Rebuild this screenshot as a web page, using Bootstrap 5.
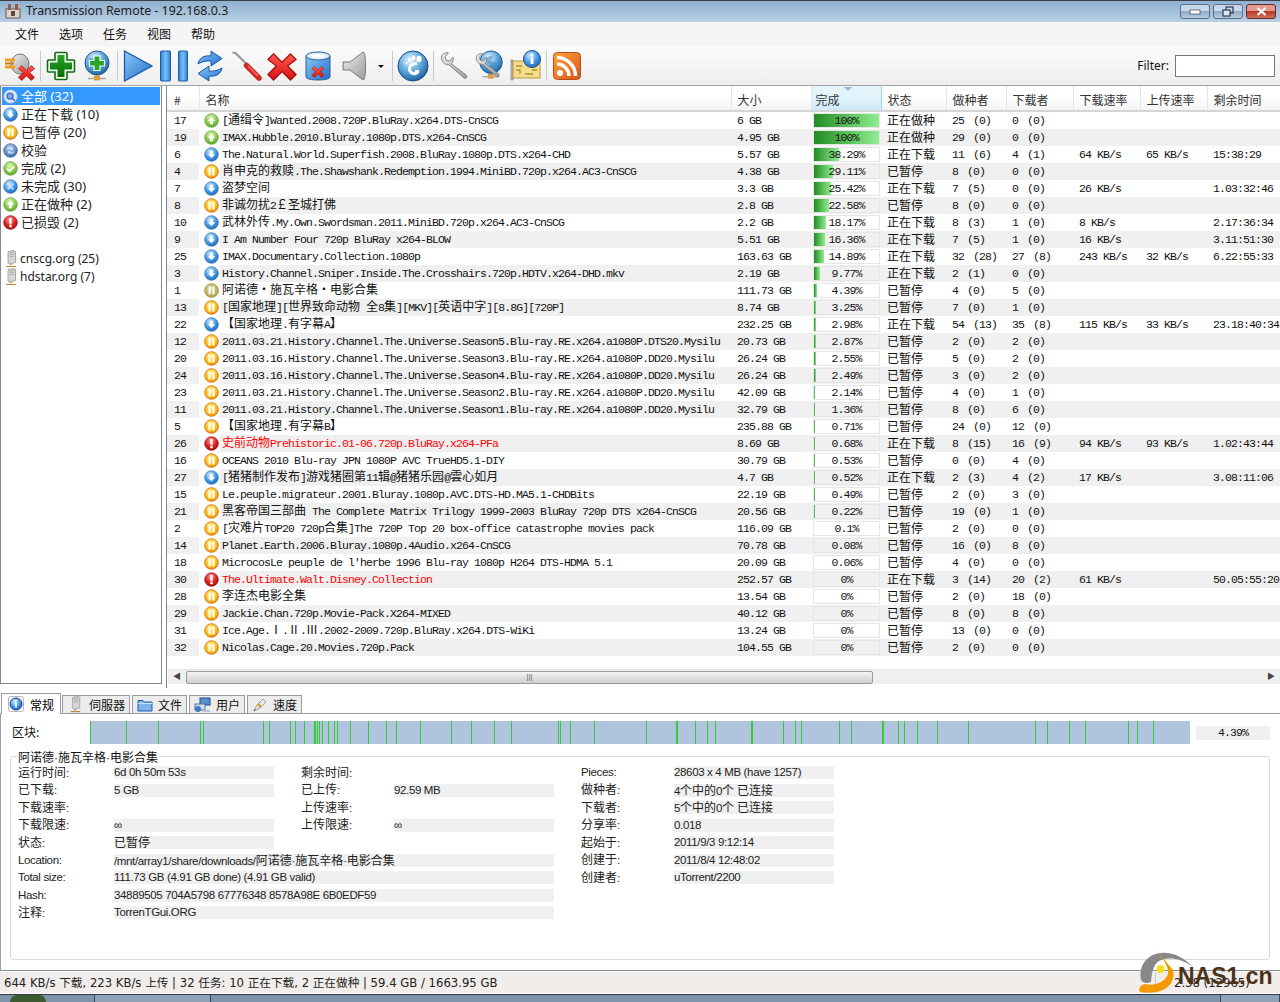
<!DOCTYPE html>
<html lang="en">
<head>
    <meta charset="UTF-8">
    <title>Transmission Remote - 192.168.0.3</title>
    <link href="https://cdn.jsdelivr.net/npm/bootstrap@5.3.3/dist/css/bootstrap.min.css" rel="stylesheet">
    <style>
        html, body { height: 1002px; overflow: hidden; }
        body {
            background: #fff;
            color: #111;
            font-family: "Liberation Sans", "Noto Sans CJK SC", sans-serif;
            font-size: 12px;
        }
        .svg-defs { width: 0; height: 0; position: absolute; }

        /* window chrome */
        .win-title {
            height: 22px;
            border-top: 1px solid #3a3f46;
            background: linear-gradient(#8fb0d0, #b9cfe4);
            font-family: "Noto Sans", sans-serif;
            font-size: 12.4px;
            padding-left: 5px;
            padding-bottom: 1px;
        }
        .win-title .app-name { margin-left: 5px; color: #1a1a1a; }
        .win-btn {
            width: 30px; height: 15px;
            border: 1px solid #5c6f86;
            border-radius: 3px;
            background: linear-gradient(#c9d9ea 45%, #92adc8 50%, #b4cade);
        }
        .win-btn.is-close { background: linear-gradient(#e39a8c 45%, #bb3a26 50%, #d0705c); border-color: #6b2a2a; }
        .win-btns { margin-right: 4px; margin-top: 1px; gap: 3px; }
        .win-menu {
            height: 25px;
            background: #f5f5f5;
            font-family: "Noto Sans CJK SC", sans-serif;
            font-size: 12px;
            padding-left: 15px;
            padding-bottom: 2px;
            gap: 18px;
        }
        .win-menu span { width: 26px; }
        .tool-bar {
            height: 39px;
            background: linear-gradient(#fbfbfb, #eeeeee);
            padding-left: 2px;
            border-bottom: 1px solid #a0a3a8;
        }
        .tb-btn { width: 36px; height: 32px; }
        .tb-sep { width: 1px; height: 30px; background: #c8c8c8; margin: 0 2px; }
        .tb-arrow { width: 18px; }
        .tb-arrow i {
            border-left: 3px solid transparent; border-right: 3px solid transparent;
            border-top: 3px solid #111; width: 0; height: 0;
        }
        .filter-label { font-family: "Noto Sans", sans-serif; font-size: 12px; margin-right: 6px; }
        .filter-input.form-control {
            width: 100px; height: 22px; min-height: 0;
            border: 1px solid #777; border-radius: 0; margin-right: 5px; padding: 0 3px;
        }

        /* main area */
        .main-area { height: 602px; }
        .side-panel {
            width: 162px; height: 598px;
            border: 1px solid #838790;
            border-top: 0;
            padding: 1px 1px 0;
        }
        .side-panel .list-group-item {
            height: 18px; padding: 0 0 0 1px; border: 0; background: transparent; color: #222;
            font-size: 13px; line-height: 18px; gap: 3px;
            font-family: "Noto Sans", "Noto Sans CJK SC", sans-serif;
        }
        .side-panel .list-group-item.active { background: #3399ff; color: #fff; }
        .side-panel .tracker-item { font-size: 12px; gap: 1px; }
        .side-gap { height: 19px; }
        .table-panel {
            flex: 1;
            margin-left: 4px;
            border-left: 1px solid #838790;
            overflow: hidden;
        }
        .table-scroll { height: 583px; overflow: hidden; }
        .tor-table { table-layout: fixed; width: 1114px; margin: 0; }
        .tor-table > thead > tr > th {
            height: 25px; padding: 0 0 1px 6px;
            font-weight: 400; font-size: 12px;
            font-family: "Noto Sans CJK SC", sans-serif;
            color: #333;
            background: linear-gradient(#fff 40%, #f3f4f5);
            border-bottom: 2px solid #d5d5d8;
            border-right: 1px solid #e4e6e8;
            border-top: 0;
        }
        .tor-table > thead > tr > th:first-child { padding-left: 7px; }
        .tor-table > thead > tr > th.sorted {
            background: linear-gradient(#e3f4fb 40%, #cfeaf8);
            border-left: 1px solid #96d9f9;
            border-right: 1px solid #96d9f9;
            position: relative;
            padding-left: 4px;
        }
        .sort-mark {
            position: absolute; top: 1px; left: 32px;
            border-left: 4px solid transparent; border-right: 4px solid transparent;
            border-top: 4px solid #8fb8d8; width: 0; height: 0;
        }
        .tor-table > tbody > tr > td {
            height: 17px; padding: 0 0 0 6px; border: 0; line-height: 17px;
            white-space: pre;
            background: transparent; box-shadow: none;
            font-family: "Liberation Mono", monospace;
            font-size: 11.5px; letter-spacing: -.9px; color: #111;
        }
        .tor-table > tbody > tr > td:first-child { padding-left: 7px; }
        .tor-table > tbody > tr:nth-child(even) > td { background: #f0f0f0; }
        .tor-table > tbody > tr > td.cell-icon { background: #fff; padding: 0 0 0 5px; }
        .tor-table > tbody > tr > td.cell-name { padding-left: 2px; }
        .tor-table > tbody > tr > td.cell-pct { padding: 1px 1px 1px 2px; }
        .tor-table > tbody > tr > td.cell-status {
            font-family: "Noto Sans CJK SC", sans-serif; font-size: 12px; letter-spacing: 0; line-height: 16px;
        }
        .tor-table > tbody > tr.is-error > td.cell-name { color: #f00; }
        .st-ico { width: 15px; height: 15px; display: block; margin-top: 1px; }
        .cjk { font-family: "Noto Sans CJK SC", sans-serif; font-size: 12px; letter-spacing: 0; line-height: 1; }
        .paren { margin-left: 9px; }
        .pct-box.progress {
            height: 15px; border-radius: 0; background: transparent;
            border: 1px solid #e6e6e6; line-height: 13px; font-size: 11.5px;
        }
        .pct-box .progress-bar { background: linear-gradient(90deg, #228b22, #90ee90); }
        .pct-label { left: 0; top: 0; line-height: 13px; color: #111; }
        .h-scroll {
            height: 15px; margin: 0 0 0 1px; background: #f0f0f0; border-top: 1px solid #e4e4e4;
        }
        .h-arrow { width: 18px; color: #444; font-size: 8px; }
        .h-thumb {
            width: 687px; height: 13px;
            background: linear-gradient(#f4f4f4, #cfcfcf);
            border: 1px solid #9a9a9a; border-radius: 2px;
            color: #666; font-size: 8px; line-height: 10px;
        }

        /* bottom tabs */
        .info-tabs.nav-tabs {
            height: 21px; margin-top: 4px; padding-left: 1px; gap: 2px;
            border-bottom: 0; align-items: flex-end;
            font-family: "Noto Sans CJK SC", sans-serif;
            position: relative;
        }
        .info-tabs .nav-item:first-child { margin-right: -1px; }
        .info-tabs .nav-link {
            height: 18px; padding: 0 4px; margin: 0;
            border: 1px solid #9a9da3; border-bottom: 0; border-radius: 0;
            background: #ececec; color: #111; font-size: 12px; gap: 5px; line-height: 17px;
        }
        .info-tabs .nav-link.active {
            height: 21px; background: #fff; padding: 0 6px; gap: 6px; margin-bottom: -1px;
            border: 1px solid #9a9da3; border-bottom: 0;
        }
        .info-pane {
            height: 258px;
            border-top: 1px solid #9a9da3;
            border-left: 1px solid #9a9da3;
            border-bottom: 1px solid #8a8d92;
            padding: 7px 10px 0 9px;
        }
        .block-row { height: 23px; }
        .block-label { width: 80px; padding-left: 2px; padding-bottom: 2px; font-family: "Noto Sans CJK SC", sans-serif; }
        .block-map { width: 1100px; height: 23px; display: block; }
        .block-pct {
            width: 74px; height: 14px; margin-left: 6px; background: #f0f0f0;
            font-family: "Liberation Mono", monospace; font-size: 11.5px; letter-spacing: -.9px;
            line-height: 14px;
        }
        .detail-box {
            position: relative;
            height: 204px; margin-top: 12px; width: 1260px;
            border: 1px solid #d5dde6; border-radius: 3px;
            padding: 7px 0 0 7px;
        }
        .detail-title {
            position: absolute; top: -6px; left: 6px; background: #fff; padding: 0 1px;
            font-family: "Liberation Sans", "Noto Sans CJK SC", sans-serif; line-height: 14px;
        }
        .detail-grid {
            display: grid;
            grid-template-columns: 96px 160px 27px 93px 160px 27px 93px 160px;
            grid-auto-rows: 17.5px;
            align-items: center;
        }
        .d-label, .d-val {
            font-size: 11.5px; letter-spacing: -.35px; line-height: 13px; color: #222;
            font-family: "Liberation Sans", "Noto Sans CJK SC", sans-serif;
        }
        .d-val { height: 13px; background: #f0f0f0; white-space: nowrap; }
        .d-val.none { background: transparent; }
        .span-wide { grid-column: 2 / 6; }
        .col-a-label { grid-column: 1; }
        .col-c-label { grid-column: 7; }
        .col-c-val { grid-column: 8; }

        /* status + taskbar */
        .status-bar {
            height: 21px; margin-top: 1px; background: #f0edeb;
            font-family: "DejaVu Sans", "Noto Sans CJK SC", sans-serif;
            font-size: 11.65px; line-height: 23px; padding-left: 4px; color: #222;
            position: relative;
        }
        .status-rate { margin-left: auto; width: 125px; padding-left: 18px; border-left: 1px solid #cfcac6; }
        .task-bar {
            height: 8px; margin-top: 1px; background: #7f93ab;
            border-top: 1px solid #2f3a48;
        }
        .task-orb { width: 36px; height: 7px; margin-left: 10px; border-radius: 18px 18px 0 0; background: #3e5a33; }
        .task-item { height: 7px; border-left: 1px solid #39465a; border-right: 1px solid #39465a; background: #8fa2b8; }
        .mark-logo { position: absolute; left: 1139px; top: 946px; }
        .mark-text {
            position: absolute; left: 1178px; top: 962px;
            font-family: "Liberation Sans", sans-serif; font-weight: 700; font-size: 23px; line-height: 28px;
            color: #4b3318;
        }
    </style>
</head>
<body>
<svg class="svg-defs" aria-hidden="true">
    <defs>
        <radialGradient id="gBlue" cx=".4" cy=".3" r=".8"><stop offset="0" stop-color="#cfeaff"/><stop offset=".55" stop-color="#3f97e6"/><stop offset="1" stop-color="#1c5fae"/></radialGradient>
        <radialGradient id="gOrange" cx=".45" cy=".35" r=".75"><stop offset="0" stop-color="#fff09a"/><stop offset=".55" stop-color="#ffbf10"/><stop offset="1" stop-color="#e8770a"/></radialGradient>
        <radialGradient id="gOlive" cx=".45" cy=".35" r=".75"><stop offset="0" stop-color="#dfe0a0"/><stop offset=".6" stop-color="#c2b060"/><stop offset="1" stop-color="#98a050"/></radialGradient>
        <radialGradient id="gGreen" cx=".45" cy=".3" r=".8"><stop offset="0" stop-color="#e2f7b8"/><stop offset=".55" stop-color="#86c84a"/><stop offset="1" stop-color="#4f9a24"/></radialGradient>
        <radialGradient id="gRed" cx=".45" cy=".3" r=".8"><stop offset="0" stop-color="#ff9a9a"/><stop offset=".55" stop-color="#e21b1b"/><stop offset="1" stop-color="#8f0b0b"/></radialGradient>
        <radialGradient id="gSteel" cx=".45" cy=".3" r=".8"><stop offset="0" stop-color="#b5d0ee"/><stop offset=".6" stop-color="#5a87c4"/><stop offset="1" stop-color="#2f5c9c"/></radialGradient>
        <radialGradient id="gGlobe" cx=".4" cy=".3" r=".8"><stop offset="0" stop-color="#e4f4ff"/><stop offset=".5" stop-color="#5ba6dc"/><stop offset="1" stop-color="#134f8e"/></radialGradient>
        <linearGradient id="gBar" x1="0" x2="1" y1="0" y2="0"><stop offset="0" stop-color="#2b7fd8"/><stop offset=".5" stop-color="#7cc0f5"/><stop offset="1" stop-color="#2b7fd8"/></linearGradient>
        <linearGradient id="gPlay" x1="0" x2="1" y1="0" y2="1"><stop offset="0" stop-color="#8cc8f8"/><stop offset="1" stop-color="#1f6fca"/></linearGradient>
        <linearGradient id="gCross" x1="0" x2="0" y1="0" y2="1"><stop offset="0" stop-color="#25a525"/><stop offset="1" stop-color="#067006"/></linearGradient>
        <linearGradient id="gX" x1="0" x2="0" y1="0" y2="1"><stop offset="0" stop-color="#ff5a50"/><stop offset="1" stop-color="#d80f0f"/></linearGradient>
        <linearGradient id="gMetal" x1="0" x2="1" y1="0" y2="1"><stop offset="0" stop-color="#f0f0f0"/><stop offset="1" stop-color="#9a9a9a"/></linearGradient>
        <linearGradient id="gRss" x1="0" x2="1" y1="0" y2="1"><stop offset="0" stop-color="#ffa53a"/><stop offset="1" stop-color="#d9541a"/></linearGradient>

        <symbol id="s-dn" viewBox="0 0 16 16"><circle cx="8" cy="8" r="7.3" fill="url(#gBlue)" stroke="#2a6db0" stroke-width=".7"/><path d="M6.3 4h3.4v3.6h2.2L8 12 4.100 7.600h2.200z" fill="#fff"/></symbol>
        <symbol id="s-up" viewBox="0 0 16 16"><circle cx="8" cy="8" r="7.3" fill="url(#gGreen)" stroke="#5d9a2e" stroke-width=".7"/><path d="M6.300 12h3.400V8.400h2.200L8 4 4.100 8.400h2.200z" fill="#fff"/></symbol>
        <symbol id="s-pa" viewBox="0 0 16 16"><circle cx="8" cy="8" r="7.3" fill="url(#gOrange)" stroke="#c8641a" stroke-width=".8"/><rect x="4.800" y="3.800" width="2.300" height="8.400" fill="#fff"/><rect x="8.900" y="3.800" width="2.300" height="8.400" fill="#fff"/></symbol>
        <symbol id="s-pb" viewBox="0 0 16 16"><circle cx="8" cy="8" r="7.300" fill="url(#gOlive)" stroke="#988a40" stroke-width=".8"/><rect x="4.800" y="3.800" width="2.300" height="8.400" fill="#fff"/><rect x="8.900" y="3.800" width="2.300" height="8.400" fill="#fff"/></symbol>
        <symbol id="s-err" viewBox="0 0 16 16"><circle cx="8" cy="8" r="7.300" fill="url(#gRed)" stroke="#7c1010" stroke-width=".7"/><rect x="6.700" y="3" width="2.600" height="6.500" rx="1" fill="#fff"/><circle cx="8" cy="11.700" r="1.500" fill="#fff"/></symbol>
        <symbol id="s-all" viewBox="0 0 16 16"><circle cx="8" cy="8" r="7.300" fill="#dce8f7" stroke="#8aa7cc" stroke-width=".7"/><circle cx="7.500" cy="7.500" r="3.200" fill="#7fa6e6" stroke="#3d68c4" stroke-width="1.400"/><path d="M10 10l2.500 2.500" stroke="#3d68c4" stroke-width="1.600"/></symbol>
        <symbol id="s-sync" viewBox="0 0 16 16"><circle cx="8" cy="8" r="7.300" fill="url(#gSteel)" stroke="#36609c" stroke-width=".7"/><path d="M4 7c.6-2 3-3 5-2l1-1 .7 3.400-3.400-.4 1-1c-1.300-.6-2.700-.1-3.300 1zM12 9c-.6 2-3 3-5 2l-1 1-.7-3.400 3.400.4-1 1c1.300.6 2.700.1 3.300-1z" fill="#dceafa"/></symbol>
        <symbol id="s-ok" viewBox="0 0 16 16"><circle cx="8" cy="8" r="7.300" fill="url(#gGreen)" stroke="#5d9a2e" stroke-width=".7"/><path d="M4.300 8l2.700 2.800 4.700-5" fill="none" stroke="#fff" stroke-width="2"/></symbol>
        <symbol id="s-no" viewBox="0 0 16 16"><circle cx="8" cy="8" r="7.300" fill="url(#gBlue)" stroke="#2a6db0" stroke-width=".7"/><path d="M5 5l6 6M11 5l-6 6" stroke="#cfe2f5" stroke-width="1.700"/></symbol>
        <symbol id="s-srv" viewBox="0 0 16 18"><path d="M5 1.500l6-1 1.500 1v11l-6 1.500-1.500-1z" fill="#d8d8d8" stroke="#8a8a8a" stroke-width=".7"/><path d="M6.500 3l4.500-.8M6.500 5l4.500-.8M6.500 7l4.500-.8" stroke="#9a9a9a" stroke-width=".7"/><path d="M8 14v1.500M3 16.500h10" stroke="#b88a3a" stroke-width="1.200"/></symbol>
        <symbol id="t-red-x" viewBox="0 0 16 16"><path d="M3.500 1.500L8 6l4.500-4.500 3 3L11 8l4.500 4.500-3 3L8 11l-4.500 4.500-3-3L5 8 .500 4.500z" fill="url(#gX)" stroke="#a31212" stroke-width=".7"/></symbol>
        <symbol id="t-globe" viewBox="0 0 32 32"><circle cx="16" cy="13" r="12" fill="url(#gGlobe)" stroke="#1c5a96"/><path d="M8 8c4 1 6-2 9-2 2 2-2 4-1 6 3 2 6 0 8 3-2 4-5 6-7 7-1-3-3-4-3-7-3-1-5-3-6-7z" fill="#3f8ab8" opacity=".55"/><path d="M16 25v3" stroke="#999" stroke-width="2"/><rect x="13.500" y="26" width="5" height="4" fill="#f0a030" stroke="#c07a18" stroke-width=".6"/><path d="M7 28.500h6M19 28.500h6" stroke="#aaa" stroke-width="1.500"/></symbol>
        <symbol id="t-wrench" viewBox="0 0 32 32"><path d="M3 5c1-2 4-3.500 7-3l-3.500 4 .8 3.600 3.700 1 4-3.800c.6 2.700-.2 5.400-2 6.800L29.500 26c1.200 1.300-.9 4.300-2.600 3L10.600 14.700C7.500 15.500 1.300 12 3 5z" fill="url(#gMetal)" stroke="#7e7e7e" stroke-width="1"/></symbol>
    </defs>
</svg>

<div class="win-title d-flex align-items-center">
    <svg width="16" height="16" viewBox="0 0 16 16"><rect x="1" y="6" width="14" height="9" fill="#d8d4cc" stroke="#6a5a4a"/><rect x="3" y="1" width="3" height="6" fill="#9c5a46"/><rect x="10" y="1" width="3" height="6" fill="#9c5a46"/><rect x="6" y="8" width="4" height="5" fill="#5a4a3e"/></svg>
    <span class="app-name">Transmission Remote - 192.168.0.3</span>
    <div class="win-btns d-flex ms-auto">
        <div class="win-btn d-flex align-items-center justify-content-center"><svg width="12" height="6" viewBox="0 0 12 6"><rect x="1" y="1" width="10" height="4" fill="#fff" stroke="#44566c" stroke-width=".8"/></svg></div>
        <div class="win-btn d-flex align-items-center justify-content-center"><svg width="12" height="11" viewBox="0 0 12 11"><rect x="4" y="1" width="7" height="6" fill="none" stroke="#33465c" stroke-width="1.300"/><rect x="1" y="4" width="7" height="6" fill="#dfe8f2" stroke="#33465c" stroke-width="1.300"/></svg></div>
        <div class="win-btn is-close d-flex align-items-center justify-content-center"><svg width="11" height="9" viewBox="0 0 11 9"><path d="M1.500 1l8 7M9.500 1l-8 7" stroke="#fff" stroke-width="2.200"/></svg></div>
    </div>
</div>

<div class="win-menu d-flex align-items-center"><span>文件</span><span>选项</span><span>任务</span><span>视图</span><span>帮助</span></div>

<div class="tool-bar d-flex align-items-center">
    <div class="tb-btn d-flex align-items-center justify-content-center"><svg width="32" height="32" viewBox="0 0 32 32"><ellipse cx="16" cy="14" rx="9" ry="10" fill="url(#gMetal)" stroke="#777"/><path d="M1 10h10M1 17h10" stroke="#f0a020" stroke-width="3"/><path d="M1 13.500h9" stroke="#c87818" stroke-width="2"/><use href="#t-red-x" x="14" y="14" width="17" height="17"/></svg></div>
    <div class="tb-sep"></div>
    <div class="tb-btn d-flex align-items-center justify-content-center"><svg width="30" height="30" viewBox="0 0 30 30"><path d="M10 1.500h10a1 1 0 0 1 1 1V9h6.500a1 1 0 0 1 1 1v10a1 1 0 0 1-1 1H21v6.500a1 1 0 0 1-1 1H10a1 1 0 0 1-1-1V21H2.500a1 1 0 0 1-1-1V10a1 1 0 0 1 1-1H9V2.500a1 1 0 0 1 1-1z" fill="#f4fff0" stroke="#0f6b12" stroke-width="1.600"/><path d="M11.500 4h7v7.500H26v7h-7.500V26h-7v-7.500H4v-7h7.500z" fill="url(#gCross)"/></svg></div>
    <div class="tb-btn d-flex align-items-center justify-content-center"><svg width="32" height="32" viewBox="0 0 32 32"><use href="#t-globe" width="32" height="32"/><path d="M13 6h6v4.500h4.500v5.500H19v4.500h-6V16H8.500v-5.500H13z" fill="#28a428" stroke="#eaffea" stroke-width="1.200"/></svg></div>
    <div class="tb-sep"></div>
    <div class="tb-btn d-flex align-items-center justify-content-center"><svg width="32" height="32" viewBox="0 0 32 32"><path d="M2.500 1L30 16 2.500 31z" fill="url(#gPlay)" stroke="#1c5aa6" stroke-width="1.300"/></svg></div>
    <div class="tb-btn d-flex align-items-center justify-content-center"><svg width="32" height="32" viewBox="0 0 32 32"><rect x="2.500" y="1" width="10" height="30" rx="1" fill="url(#gBar)" stroke="#1c5aa6"/><rect x="20.500" y="1" width="9" height="30" rx="1" fill="url(#gBar)" stroke="#1c5aa6"/></svg></div>
    <div class="tb-btn d-flex align-items-center justify-content-center"><svg width="32" height="32" viewBox="0 0 32 32"><path d="M4 14C5 8 10 5 17 6V1l11 7.500L17 16v-5c-5-.5-9 .5-13 3z" fill="url(#gPlay)" stroke="#1c5aa6"/><path d="M28 18c-1 6-6 9-13 8v5L4 23.500 15 16v5c5 .5 9-.5 13-3z" fill="url(#gPlay)" stroke="#1c5aa6"/></svg></div>
    <div class="tb-btn d-flex align-items-center justify-content-center"><svg width="32" height="32" viewBox="0 0 32 32"><path d="M2.500 2.500l3 .5 12 12" stroke="#9a9a9a" stroke-width="2.200" fill="none"/><path d="M16.500 15.500l12.500 12.500" stroke="#d02a20" stroke-width="5.500" stroke-linecap="round"/><path d="M18 16l10 10" stroke="#f08070" stroke-width="1.200"/></svg></div>
    <div class="tb-btn d-flex align-items-center justify-content-center"><svg width="30" height="30" viewBox="0 0 16 16"><use href="#t-red-x" width="16" height="16"/></svg></div>
    <div class="tb-btn d-flex align-items-center justify-content-center"><svg width="26" height="30" viewBox="0 0 26 30"><path d="M1 5v21c0 4 24 4 24 0V5z" fill="url(#gPlay)" stroke="#2a5f96"/><ellipse cx="13" cy="5" rx="12" ry="4" fill="#dce9f4" stroke="#2a5f96"/><ellipse cx="13" cy="5" rx="7" ry="2" fill="#fff"/><use href="#t-red-x" x="5" y="14" width="16" height="13"/></svg></div>
    <div class="tb-btn d-flex align-items-center justify-content-center tb-speaker"><svg width="24" height="30" viewBox="0 0 24 30"><path d="M1 11h7L21 1c2 0 2.500 7 2.500 14s-.5 14-2.500 14L8 19H1z" fill="url(#gMetal)" stroke="#777"/></svg></div>
    <div class="tb-arrow d-flex justify-content-center"><i></i></div>
    <div class="tb-sep"></div>
    <div class="tb-btn d-flex align-items-center justify-content-center"><svg width="32" height="32" viewBox="0 0 32 32"><circle cx="16" cy="16" r="15" fill="url(#gGlobe)" stroke="#0f4a8a"/><path d="M20 12c-6 0-9 3-9 7s4 7 8 6c3-1 4-3 3-5h-4c0 1.500 0 2-1 2-2 0-3-1.500-3-3.500s2-3.500 6-3.500z" fill="#fff"/><ellipse cx="22" cy="9" rx="2.600" ry="3.200" fill="#fff"/><ellipse cx="16.500" cy="8" rx="1.800" ry="2.400" fill="#fff"/><ellipse cx="12.500" cy="10" rx="1.500" ry="1.900" fill="#fff"/><ellipse cx="9.500" cy="13" rx="1.200" ry="1.500" fill="#fff"/></svg></div>
    <div class="tb-sep"></div>
    <div class="tb-btn d-flex align-items-center justify-content-center"><svg width="30" height="30" viewBox="0 0 32 32"><use href="#t-wrench" width="32" height="32"/></svg></div>
    <div class="tb-btn d-flex align-items-center justify-content-center"><svg width="32" height="32" viewBox="0 0 32 32"><use href="#t-globe" x="2" y="0" width="30" height="30"/><use href="#t-wrench" x="0" y="2" width="27" height="27"/></svg></div>
    <div class="tb-btn d-flex align-items-center justify-content-center"><svg width="32" height="32" viewBox="0 0 32 32"><path d="M1 10h2v20H1z" fill="#b8bcc0" stroke="#777" stroke-width=".6"/><rect x="3" y="11" width="27" height="17" fill="#f5dc8a" stroke="#b89a40"/><path d="M6 16h6M6 20h4v4M15 24h8M22 20h5" stroke="#b0902c" stroke-width="1.300" fill="none"/><circle cx="22" cy="9" r="8.500" fill="url(#gBlue)" stroke="#154f94"/><rect x="20.600" y="7.500" width="2.800" height="6.500" fill="#fff"/><circle cx="22" cy="5" r="1.600" fill="#fff"/></svg></div>
    <div class="tb-sep"></div>
    <div class="tb-btn d-flex align-items-center justify-content-center"><svg width="28" height="28" viewBox="0 0 28 28"><rect x=".5" y=".5" width="27" height="27" rx="4" fill="url(#gRss)" stroke="#b84c12"/><circle cx="7" cy="21" r="3" fill="#fff"/><path d="M4 12c6.500 0 12 5.500 12 12M4 5.500C14 5.500 22.500 14 22.500 24" fill="none" stroke="#fff" stroke-width="3.400"/></svg></div>
    <span class="filter-label ms-auto">Filter:</span>
    <input class="form-control filter-input" type="text">
</div>

<div class="main-area d-flex">
    <div class="side-panel">
        <div class="list-group list-group-flush" id="sideList"></div>
    </div>
    <div class="table-panel">
        <div class="table-scroll">
            <table class="table tor-table">
                <colgroup><col style="width:32px"><col style="width:21px"><col style="width:511px"><col style="width:80px"><col style="width:70px"><col style="width:65px"><col style="width:60px"><col style="width:67px"><col style="width:67px"><col style="width:67px"><col style="width:74px"></colgroup>
                <thead>
                    <tr>
                        <th>#</th><th colspan="2">名称</th><th>大小</th><th class="sorted">完成<i class="sort-mark"></i></th><th>状态</th><th>做种者</th><th>下载者</th><th>下载速率</th><th>上传速率</th><th>剩余时间</th>
                    </tr>
                </thead>
                <tbody id="torRows"></tbody>
            </table>
        </div>
        <div class="h-scroll d-flex align-items-center">
            <div class="h-arrow text-center">◀</div>
            <div class="h-thumb text-center">|||</div>
            <div class="h-arrow text-center ms-auto">▶</div>
        </div>
    </div>
</div>

<ul class="nav nav-tabs info-tabs">
    <li class="nav-item"><a class="nav-link active d-flex align-items-center" href="#"><svg width="16" height="16" viewBox="0 0 16 16"><rect x=".5" y=".5" width="15" height="15" rx="2" fill="#f6f6f6" stroke="#bbb"/><circle cx="8" cy="8" r="6" fill="url(#gBlue)" stroke="#123f96"/><rect x="7" y="7" width="2" height="4.500" fill="#fff"/><circle cx="8" cy="5" r="1.100" fill="#fff"/></svg>常规</a></li>
    <li class="nav-item"><a class="nav-link d-flex align-items-center" href="#"><svg width="17" height="17"><use href="#s-srv" width="17" height="17"/></svg>伺服器</a></li>
    <li class="nav-item"><a class="nav-link d-flex align-items-center" href="#"><svg width="16" height="14" viewBox="0 0 16 14"><path d="M1 2.500h5l1.500 1.500H15v9H1z" fill="#7fb4e8" stroke="#1d5fb0"/><path d="M1 5.500h14" stroke="#c9e2f8"/></svg>文件</a></li>
    <li class="nav-item"><a class="nav-link d-flex align-items-center" href="#"><svg width="17" height="16" viewBox="0 0 17 16"><rect x="6" y="1" width="10" height="7" fill="#5a8fd0" stroke="#1d4f90"/><rect x="1" y="7" width="10" height="6" fill="#cfe0f2" stroke="#50709a"/><circle cx="4" cy="12" r="3" fill="#3d78c0"/><path d="M9 13h7v2H9z" fill="#b8c4d0"/></svg>用户</a></li>
    <li class="nav-item"><a class="nav-link d-flex align-items-center" href="#"><svg width="16" height="16" viewBox="0 0 16 16"><path d="M2 14l3-6 6-6 3 3-6 6z" fill="#e8e8e8" stroke="#888" stroke-width=".8"/><path d="M6 7l3 3" stroke="#e09a20" stroke-width="2.400"/><path d="M2 14l1-2" stroke="#555"/></svg>速度</a></li>
</ul>

<div class="info-pane">
    <div class="block-row d-flex align-items-center">
        <div class="block-label">区块:</div>
        <svg class="block-map" id="blockMap" viewBox="0 0 1100 23"><rect width="1100" height="23" fill="#b0c4de"/></svg>
        <div class="block-pct text-center">4.39%</div>
    </div>
    <div class="detail-box">
        <div class="detail-title">阿诺德·施瓦辛格·电影合集</div>
        <div class="detail-grid" id="detailGrid">
            <div class="d-label">运行时间:</div><div class="d-val">6d 0h 50m 53s</div><div></div>
            <div class="d-label">剩余时间:</div><div class="d-val none"></div><div></div>
            <div class="d-label">Pieces:</div><div class="d-val">28603 x 4 MB (have 1257)</div>

            <div class="d-label">已下载:</div><div class="d-val">5 GB</div><div></div>
            <div class="d-label">已上传:</div><div class="d-val">92.59 MB</div><div></div>
            <div class="d-label">做种者:</div><div class="d-val">4个中的0个 已连接</div>

            <div class="d-label">下载速率:</div><div class="d-val none"></div><div></div>
            <div class="d-label">上传速率:</div><div class="d-val none"></div><div></div>
            <div class="d-label">下载者:</div><div class="d-val">5个中的0个 已连接</div>

            <div class="d-label">下载限速:</div><div class="d-val">∞</div><div></div>
            <div class="d-label">上传限速:</div><div class="d-val">∞</div><div></div>
            <div class="d-label">分享率:</div><div class="d-val">0.018</div>

            <div class="d-label">状态:</div><div class="d-val">已暂停</div>
            <div class="d-label col-c-label">起始于:</div><div class="d-val col-c-val">2011/9/3 9:12:14</div>

            <div class="d-label">Location:</div><div class="d-val span-wide">/mnt/array1/share/downloads/阿诺德·施瓦辛格·电影合集</div>
            <div class="d-label col-c-label">创建于:</div><div class="d-val col-c-val">2011/8/4 12:48:02</div>

            <div class="d-label">Total size:</div><div class="d-val span-wide">111.73 GB (4.91 GB done) (4.91 GB valid)</div>
            <div class="d-label col-c-label">创建者:</div><div class="d-val col-c-val">uTorrent/2200</div>

            <div class="d-label col-a-label">Hash:</div><div class="d-val span-wide">34889505 704A5798 67776348 8578A98E 6B0EDF59</div>
            <div class="d-label col-a-label">注释:</div><div class="d-val span-wide">TorrenTGui.ORG</div>
        </div>
    </div>
</div>

<div class="status-bar d-flex">
    <span>644 KB/s 下载, 223 KB/s 上传 | 32 任务: 10 正在下载, 2 正在做种 | 59.4 GB / 1663.95 GB</span>
    <span class="status-rate">2.38 (12965)</span>
</div>
<div class="task-bar d-flex">
    <div class="task-orb"></div>
    <div class="task-item ms-5" style="width:117px"></div>
    <div class="task-item ms-auto" style="width:60px"></div>
</div>

<svg class="mark-logo" width="58" height="50" viewBox="0 0 58 50">
    <path d="M2 34C-1 20 8 8 22 7c12-1 22 4 32 14C42 12 30 11 22 14c-7 3-9 10-10 22-5 2-8 1-10-2z" fill="#888"/>
    <path d="M14 0l20 24c3 12-6 20-16 22-6 1-14 1-17 0-2-3 0-7 5-8 8 2 20-1 23-10 1-7-5-16-15-28z" fill="#f29a00"/>
    <circle cx="21.500" cy="23" r="4" fill="#f5dc20"/>
</svg>
<div class="mark-text">NAS1.cn</div>

<script>
    // id, icon, name, size, done, status, seeds, leechers, down, up, eta
    const rows = [
        [17,'up','[通缉令]Wanted.2008.720P.BluRay.x264.DTS-CnSCG','6 GB','100','正在做种','25,0','0,0'],
        [19,'up','IMAX.Hubble.2010.Bluray.1080p.DTS.x264-CnSCG','4.95 GB','100','正在做种','29,0','0,0'],
        [6,'dn','The.Natural.World.Superfish.2008.BluRay.1080p.DTS.x264-CHD','5.57 GB','38.29','正在下载','11,6','4,1','64 KB/s','65 KB/s','15:38:29'],
        [4,'pa','肖申克的救赎.The.Shawshank.Redemption.1994.MiniBD.720p.x264.AC3-CnSCG','4.38 GB','29.11','已暂停','8,0','0,0'],
        [7,'dn','盗梦空间','3.3 GB','25.42','正在下载','7,5','0,0','26 KB/s','','1.03:32:46'],
        [8,'pa','非诚勿扰2￡圣城打佛','2.8 GB','22.58','已暂停','8,0','0,0'],
        [10,'dn','武林外传.My.Own.Swordsman.2011.MiniBD.720p.x264.AC3-CnSCG','2.2 GB','18.17','正在下载','8,3','1,0','8 KB/s','','2.17:36:34'],
        [9,'dn','I Am Number Four 720p BluRay x264-BLOW','5.51 GB','16.36','正在下载','7,5','1,0','16 KB/s','','3.11:51:30'],
        [25,'dn','IMAX.Documentary.Collection.1080p','163.63 GB','14.89','正在下载','32,28','27,8','243 KB/s','32 KB/s','6.22:55:33'],
        [3,'dn','History.Channel.Sniper.Inside.The.Crosshairs.720p.HDTV.x264-DHD.mkv','2.19 GB','9.77','正在下载','2,1','0,0'],
        [1,'pb','阿诺德·施瓦辛格·电影合集','111.73 GB','4.39','已暂停','4,0','5,0'],
        [13,'pa','[国家地理][世界致命动物 全8集][MKV][英语中字][8.8G][720P]','8.74 GB','3.25','已暂停','7,0','1,0'],
        [22,'dn','【国家地理.有字幕A】','232.25 GB','2.98','正在下载','54,13','35,8','115 KB/s','33 KB/s','23.18:40:34'],
        [12,'pa','2011.03.21.History.Channel.The.Universe.Season5.Blu-ray.RE.x264.a1080P.DTS20.Mysilu','20.73 GB','2.87','已暂停','2,0','2,0'],
        [20,'pa','2011.03.16.History.Channel.The.Universe.Season3.Blu-ray.RE.x264.a1080P.DD20.Mysilu','26.24 GB','2.55','已暂停','5,0','2,0'],
        [24,'pa','2011.03.16.History.Channel.The.Universe.Season4.Blu-ray.RE.x264.a1080P.DD20.Mysilu','26.24 GB','2.49','已暂停','3,0','2,0'],
        [23,'pa','2011.03.21.History.Channel.The.Universe.Season2.Blu-ray.RE.x264.a1080P.DD20.Mysilu','42.09 GB','2.14','已暂停','4,0','1,0'],
        [11,'pa','2011.03.21.History.Channel.The.Universe.Season1.Blu-ray.RE.x264.a1080P.DD20.Mysilu','32.79 GB','1.36','已暂停','8,0','6,0'],
        [5,'pa','【国家地理.有字幕B】','235.88 GB','0.71','已暂停','24,0','12,0'],
        [26,'err','史前动物Prehistoric.01-06.720p.BluRay.x264-PFa','8.69 GB','0.68','正在下载','8,15','16,9','94 KB/s','93 KB/s','1.02:43:44'],
        [16,'pa','OCEANS 2010 Blu-ray JPN 1080P AVC TrueHD5.1-DIY','30.79 GB','0.53','已暂停','0,0','4,0'],
        [27,'dn','[猪猪制作发布]游戏猪圈第11辑@猪猪乐园@雲心如月','4.7 GB','0.52','正在下载','2,3','4,2','17 KB/s','','3.08:11:06'],
        [15,'pa','Le.peuple.migrateur.2001.Bluray.1080p.AVC.DTS-HD.MA5.1-CHDBits','22.19 GB','0.49','已暂停','2,0','3,0'],
        [21,'pa','黑客帝国三部曲 The Complete Matrix Trilogy 1999-2003 BluRay 720p DTS x264-CnSCG','20.56 GB','0.22','已暂停','19,0','1,0'],
        [2,'pa','[灾难片TOP20 720p合集]The 720P Top 20 box-office catastrophe movies pack','116.09 GB','0.1','已暂停','2,0','0,0'],
        [14,'pa','Planet.Earth.2006.Bluray.1080p.4Audio.x264-CnSCG','70.78 GB','0.08','已暂停','16,0','8,0'],
        [18,'pa',"MicrocosLe peuple de l'herbe 1996 Blu-ray 1080p H264 DTS-HDMA 5.1",'20.09 GB','0.06','已暂停','4,0','0,0'],
        [30,'err','The.Ultimate.Walt.Disney.Collection','252.57 GB','0','正在下载','3,14','20,2','61 KB/s','','50.05:55:20'],
        [28,'pa','李连杰电影全集','13.54 GB','0','已暂停','2,0','18,0'],
        [29,'pa','Jackie.Chan.720p.Movie-Pack.X264-MIXED','40.12 GB','0','已暂停','8,0','8,0'],
        [31,'pa','Ice.Age.Ⅰ.Ⅱ.Ⅲ.2002-2009.720p.BluRay.x264.DTS-WiKi','13.24 GB','0','已暂停','13,0','0,0'],
        [32,'pa','Nicolas.Cage.20.Movies.720p.Pack','104.55 GB','0','已暂停','2,0','0,0']
    ];

    // Latin runs stay in the half-width font, CJK runs go 12px wide
    const wrapCjk = s => s.replace(/[^\x00-\x7f]+/g, m => `<span class="cjk">${m}</span>`);
    const peers = s => { const [a, b] = s.split(','); return `${a}<span class="paren">(${b})</span>`; };

    document.getElementById('torRows').innerHTML = rows.map(r => `
        <tr class="${r[1] === 'err' ? 'is-error' : ''}">
            <td>${r[0]}</td>
            <td class="cell-icon"><svg class="st-ico"><use href="#s-${r[1]}"/></svg></td>
            <td class="cell-name">${wrapCjk(r[2])}</td>
            <td>${r[3]}</td>
            <td class="cell-pct"><div class="progress pct-box position-relative"><div class="progress-bar" style="width:${r[4]}%"></div><div class="pct-label position-absolute w-100 text-center">${r[4]}%</div></div></td>
            <td class="cell-status">${r[5]}</td>
            <td>${peers(r[6])}</td>
            <td>${peers(r[7])}</td>
            <td>${r[8] || ''}</td>
            <td>${r[9] || ''}</td>
            <td>${r[10] || ''}</td>
        </tr>`).join('');

    // same idea in the details box, but the middle dot stays narrow there
    document.querySelectorAll('#detailGrid > div').forEach(el => {
        el.innerHTML = el.innerHTML.replace(/[^\x00-\x7f·∞]+/g, m => `<span class="cjk">${m}</span>`);
    });

    const side = [
        ['all','全部','(32)',true], ['dn','正在下载','(10)'], ['pa','已暂停','(20)'], ['sync','校验',''],
        ['ok','完成','(2)'], ['no','未完成','(30)'], ['up','正在做种','(2)'], ['err','已损毁','(2)']
    ];
    document.getElementById('sideList').innerHTML = side.map(s => `
        <div class="list-group-item d-flex align-items-center${s[3] ? ' active' : ''}"><svg width="15" height="15" class="flex-shrink-0"><use href="#s-${s[0]}"/></svg><span>${s[1]} ${s[2]}</span></div>`).join('')
        + '<div class="side-gap"></div>'
        + ['cnscg.org (25)', 'hdstar.org (7)'].map(t => `
        <div class="list-group-item tracker-item d-flex align-items-center"><svg width="16" height="18" class="flex-shrink-0"><use href="#s-srv" width="16" height="18"/></svg><span>${t}</span></div>`).join('');

    // green ticks of the pieces already downloaded, x in page pixels
    const ticks = [90,126,158,200,203,263,269,290,295,304,314,315,317,319,322,328,334,337,350,368,386,396,420,451,471,494,511,558,560,570,594,646,676,677,695,707,715,751,752,783,795,801,839,851,882,883,898,904,917,937,968,1035,1047,1069,1085,1128,1137,1153];
    document.getElementById('blockMap').innerHTML += ticks.map(x => `<rect x="${x - 90}" width="1" height="23" fill="#32cd32"/>`).join('');
</script>
<script src="https://cdn.jsdelivr.net/npm/bootstrap@5.3.3/dist/js/bootstrap.bundle.min.js"></script>
</body>
</html>
